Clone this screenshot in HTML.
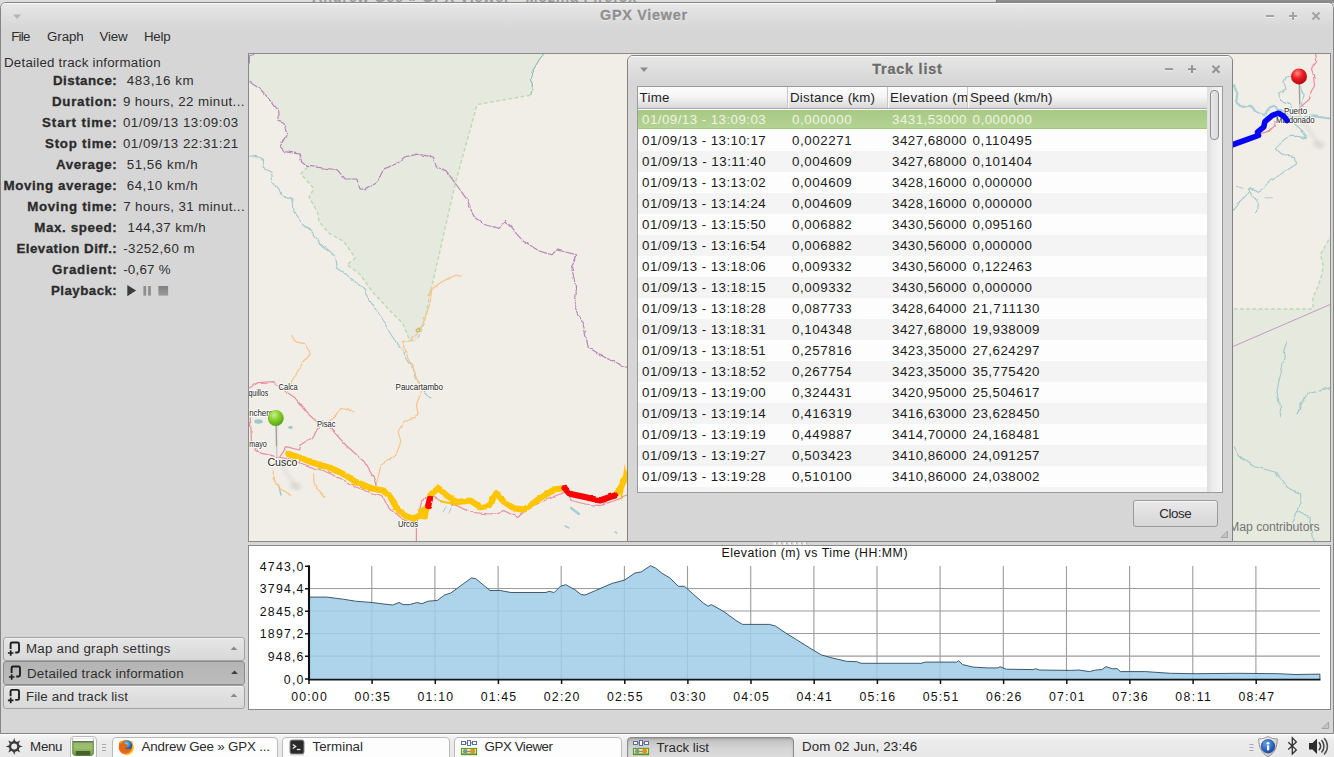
<!DOCTYPE html>
<html><head><meta charset="utf-8"><title>GPX Viewer</title>
<style>
*{box-sizing:border-box;margin:0;padding:0}
html,body{width:1334px;height:757px;overflow:hidden;background:#d6d6d6;font-family:"Liberation Sans",sans-serif;}
#root{position:absolute;left:0;top:0;width:1334px;height:757px;overflow:hidden;background:#d6d6d6}
.a{position:absolute}
.t{position:absolute;white-space:pre;}
svg{position:absolute;left:0;top:0;overflow:visible}
</style></head>
<body><div id="root">
<!-- p_window -->
<div class="a" style="left:0;top:0;width:997px;height:3px;background:#dcdcdc"></div>
<div class="a" style="left:996px;top:0;width:338px;height:3px;background:#8e8e8e"></div>
<div class="a" style="left:996px;top:0;width:1px;height:3px;background:#777"></div>
<div class="a" style="left:312px;top:-10px;width:340px;height:13px;overflow:hidden;font-size:14.5px;font-weight:bold;color:#9a9a9a;line-height:15px;letter-spacing:.72px;white-space:pre">Andrew Gee » GPX Viewer - Mozilla Firefox</div>
<div class="a" style="left:0;top:2px;width:1334px;height:732px;border:1px solid #858585;border-radius:6px 6px 0 0;background:#d6d6d6"></div>
<div class="a" style="left:1px;top:3px;width:1332px;height:26px;border-radius:5px 5px 0 0;background:linear-gradient(#e7e7e7,#d6d6d6);border-top:1px solid #fbfbfb"></div>
<span class="t" id="t1" style="top:5.13px;font-size:14.35px;line-height:20px;color:#8f8f8f;font-weight:bold;-webkit-text-stroke:.3px #8f8f8f;letter-spacing:0.748px;left:443.87px;width:400px;text-align:center;text-shadow:0 1px 0 #f4f4f4;">GPX Viewer</span>
<svg width="1334" height="60"><path d="M13 14.5h8l-4 4.5z" fill="#b4b4b4"/><path d="M13 15.5l4 4.5 4-4.5" fill="none" stroke="#eee" stroke-width="1" opacity=".0"/>
<g stroke="#a3a3a3" stroke-width="2" fill="none"><path d="M1266 16h8" /><path d="M1289 16h8M1293 12v8"/><path d="M1312.5 12.5l7 7M1319.5 12.5l-7 7"/></g><g stroke="#f2f2f2" stroke-width="1" fill="none" opacity=".9"><path d="M1266 17.5h8"/><path d="M1289 17.5h3M1294 17.5h3M1292 20.5h2"/></g></svg>
<span class="t" id="t2" style="top:26.68px;font-size:13.32px;line-height:20px;color:#2e2e2e;letter-spacing:-0.718px;left:11.20px;">File</span>
<span class="t" id="t3" style="top:26.68px;font-size:13.32px;line-height:20px;color:#2e2e2e;letter-spacing:-0.075px;left:47.00px;">Graph</span>
<span class="t" id="t4" style="top:26.68px;font-size:13.32px;line-height:20px;color:#2e2e2e;letter-spacing:-0.208px;left:99.60px;">View</span>
<span class="t" id="t5" style="top:26.68px;font-size:13.32px;line-height:20px;color:#2e2e2e;letter-spacing:-0.197px;left:143.90px;">Help</span>
<svg width="1334" height="757"><path d="M1328.5 722l-6.5 6.5h6.5z" fill="#c4c4c4" stroke="#9a9a9a" stroke-width=".8"/></svg>
<!-- p_left -->
<span class="t" id="t6" style="top:52.98px;font-size:13.32px;line-height:20px;color:#2e2e2e;letter-spacing:0.226px;left:4.00px;">Detailed track information</span>
<span class="t" id="t7" style="top:70.98px;font-size:13.32px;line-height:20px;color:#2b2b2b;font-weight:bold;-webkit-text-stroke:.3px #2b2b2b;letter-spacing:0.483px;left:53.00px;">Distance:</span>
<span class="t" id="t8" style="top:70.98px;font-size:13.32px;line-height:20px;color:#2e2e2e;letter-spacing:0.591px;left:126.70px;">483,16 km</span>
<span class="t" id="t9" style="top:91.98px;font-size:13.32px;line-height:20px;color:#2b2b2b;font-weight:bold;-webkit-text-stroke:.3px #2b2b2b;letter-spacing:0.704px;left:52.00px;">Duration:</span>
<span class="t" id="t10" style="top:91.98px;font-size:13.32px;line-height:20px;color:#2e2e2e;letter-spacing:0.402px;left:122.90px;">9 hours, 22 minut...</span>
<span class="t" id="t11" style="top:112.98px;font-size:13.32px;line-height:20px;color:#2b2b2b;font-weight:bold;-webkit-text-stroke:.3px #2b2b2b;letter-spacing:0.886px;left:42.10px;">Start time:</span>
<span class="t" id="t12" style="top:112.98px;font-size:13.32px;line-height:20px;color:#2e2e2e;letter-spacing:0.497px;left:122.90px;">01/09/13 13:09:03</span>
<span class="t" id="t13" style="top:133.98px;font-size:13.32px;line-height:20px;color:#2b2b2b;font-weight:bold;-webkit-text-stroke:.3px #2b2b2b;letter-spacing:0.734px;left:45.10px;">Stop time:</span>
<span class="t" id="t14" style="top:133.98px;font-size:13.32px;line-height:20px;color:#2e2e2e;letter-spacing:0.497px;left:122.90px;">01/09/13 22:31:21</span>
<span class="t" id="t15" style="top:154.98px;font-size:13.32px;line-height:20px;color:#2b2b2b;font-weight:bold;-webkit-text-stroke:.3px #2b2b2b;letter-spacing:0.617px;left:56.00px;">Average:</span>
<span class="t" id="t16" style="top:154.98px;font-size:13.32px;line-height:20px;color:#2e2e2e;letter-spacing:0.558px;left:126.70px;">51,56 km/h</span>
<span class="t" id="t17" style="top:175.98px;font-size:13.32px;line-height:20px;color:#2b2b2b;font-weight:bold;-webkit-text-stroke:.3px #2b2b2b;letter-spacing:0.588px;left:3.50px;">Moving average:</span>
<span class="t" id="t18" style="top:175.98px;font-size:13.32px;line-height:20px;color:#2e2e2e;letter-spacing:0.558px;left:126.70px;">64,10 km/h</span>
<span class="t" id="t19" style="top:196.98px;font-size:13.32px;line-height:20px;color:#2b2b2b;font-weight:bold;-webkit-text-stroke:.3px #2b2b2b;letter-spacing:0.682px;left:27.20px;">Moving time:</span>
<span class="t" id="t20" style="top:196.98px;font-size:13.32px;line-height:20px;color:#2e2e2e;letter-spacing:0.396px;left:123.20px;">7 hours, 31 minut...</span>
<span class="t" id="t21" style="top:217.98px;font-size:13.32px;line-height:20px;color:#2b2b2b;font-weight:bold;-webkit-text-stroke:.3px #2b2b2b;letter-spacing:0.640px;left:34.20px;">Max. speed:</span>
<span class="t" id="t22" style="top:217.98px;font-size:13.32px;line-height:20px;color:#2e2e2e;letter-spacing:0.493px;left:127.50px;">144,37 km/h</span>
<span class="t" id="t23" style="top:238.98px;font-size:13.32px;line-height:20px;color:#2b2b2b;font-weight:bold;-webkit-text-stroke:.3px #2b2b2b;letter-spacing:0.480px;left:16.40px;">Elevation Diff.:</span>
<span class="t" id="t24" style="top:238.98px;font-size:13.32px;line-height:20px;color:#2e2e2e;letter-spacing:0.440px;left:123.20px;">-3252,60 m</span>
<span class="t" id="t25" style="top:259.98px;font-size:13.32px;line-height:20px;color:#2b2b2b;font-weight:bold;-webkit-text-stroke:.3px #2b2b2b;letter-spacing:0.704px;left:52.00px;">Gradient:</span>
<span class="t" id="t26" style="top:259.98px;font-size:13.32px;line-height:20px;color:#2e2e2e;letter-spacing:0.235px;left:123.20px;">-0,67 %</span>
<span class="t" id="t27" style="top:280.98px;font-size:13.32px;line-height:20px;color:#2b2b2b;font-weight:bold;-webkit-text-stroke:.3px #2b2b2b;letter-spacing:0.454px;left:51.00px;">Playback:</span>
<svg width="300" height="320"><defs><linearGradient id="gst" x1="0" y1="0" x2="0" y2="1"><stop offset="0" stop-color="#7e7e7e"/><stop offset="1" stop-color="#9c9c9c"/></linearGradient></defs><path d="M127.3 285v11.2l8.8-5.6z" fill="#3c3c3c"/><rect x="143.4" y="286" width="2.8" height="9.6" fill="#8f8f8f"/><rect x="148.1" y="286" width="2.8" height="9.6" fill="#8f8f8f"/><rect x="158.4" y="286" width="9.7" height="9.6" fill="url(#gst)"/></svg>
<div class="a" style="left:3px;top:637px;width:242px;height:24px;border:1px solid #a2a2a2;border-radius:3px;background:linear-gradient(#e6e6e6,#d8d8d8);box-shadow:inset 0 1px 0 #f3f3f3;"></div>
<div class="a" style="left:3px;top:661px;width:242px;height:24px;border:1px solid #8c8c8c;border-radius:3px;background:linear-gradient(#b4b4b4,#bcbcbc);"></div>
<div class="a" style="left:3px;top:685px;width:242px;height:24px;border:1px solid #a2a2a2;border-radius:3px;background:linear-gradient(#e6e6e6,#d8d8d8);box-shadow:inset 0 1px 0 #f3f3f3;"></div>
<span class="t" id="t28" style="top:639.48px;font-size:13.32px;line-height:20px;color:#2e2e2e;letter-spacing:0.255px;left:25.90px;">Map and graph settings</span>
<span class="t" id="t29" style="top:664.08px;font-size:13.32px;line-height:20px;color:#2e2e2e;letter-spacing:0.226px;left:27.00px;">Detailed track information</span>
<span class="t" id="t30" style="top:687.48px;font-size:13.32px;line-height:20px;color:#2e2e2e;letter-spacing:0.117px;left:25.90px;">File and track list</span>
<svg width="300" height="757"><g transform="translate(8.4 641.3)" fill="none" stroke="#1f1f1f" stroke-width="1.9"><path d="M2.2 7.6V2.6q0-1.4 1.4-1.4h5.6q1.4 0 1.4 1.4v7.2q0 1.4-1.4 1.4H6.8"/><path d="M-0.5 11.7h5.6M2.3 8.9v5.6" stroke-width="1.7"/></g><g transform="translate(9.4 665.3)" fill="none" stroke="#1f1f1f" stroke-width="1.9"><path d="M2.2 7.6V2.6q0-1.4 1.4-1.4h5.6q1.4 0 1.4 1.4v7.2q0 1.4-1.4 1.4H6.8"/><path d="M-0.5 11.7h5.6M2.3 8.9v5.6" stroke-width="1.7"/></g><g transform="translate(8.4 688.7)" fill="none" stroke="#1f1f1f" stroke-width="1.9"><path d="M2.2 7.6V2.6q0-1.4 1.4-1.4h5.6q1.4 0 1.4 1.4v7.2q0 1.4-1.4 1.4H6.8"/><path d="M-0.5 11.7h5.6M2.3 8.9v5.6" stroke-width="1.7"/></g><path d="M233.9 646.5l-3.4 3.6h6.8z" fill="#8a8a8a"/><path d="M234.5 670.5l-3.4 3.6h6.8z" fill="#3c3c3c"/><path d="M233.9 693.5l-3.4 3.6h6.8z" fill="#8a8a8a"/></svg>
<!-- p_map -->
<div class="a" style="left:248px;top:53px;width:1083px;height:489px;border:1px solid #8a8a8a;background:#f1eee8"></div>
<svg width="1334" height="757" viewBox="0 0 1334 757" font-family="Liberation Sans, sans-serif">
<defs><clipPath id="mc"><rect x="249" y="54" width="1081" height="487"/></clipPath><filter id="wig" filterUnits="userSpaceOnUse" x="240" y="46" width="1100" height="504"><feTurbulence type="fractalNoise" baseFrequency="0.11" numOctaves="2" seed="7" result="n"/><feDisplacementMap in="SourceGraphic" in2="n" scale="3.2" xChannelSelector="R" yChannelSelector="G"/></filter><filter id="wig2" filterUnits="userSpaceOnUse" x="240" y="46" width="1100" height="504"><feTurbulence type="fractalNoise" baseFrequency="0.075" numOctaves="2" seed="3" result="n"/><feDisplacementMap in="SourceGraphic" in2="n" scale="7" xChannelSelector="R" yChannelSelector="G"/></filter><filter id="wig1" filterUnits="userSpaceOnUse" x="240" y="46" width="1100" height="504"><feTurbulence type="fractalNoise" baseFrequency="0.16" numOctaves="2" seed="11" result="n"/><feDisplacementMap in="SourceGraphic" in2="n" scale="2.6" xChannelSelector="R" yChannelSelector="G"/></filter><filter id="blur2" x="-50%" y="-50%" width="200%" height="200%"><feGaussianBlur stdDeviation="1.8"/></filter><radialGradient id="gpin" cx=".4" cy=".3" r=".75"><stop offset="0" stop-color="#c9f08a"/><stop offset=".45" stop-color="#86cf2c"/><stop offset="1" stop-color="#4f9d10"/></radialGradient><radialGradient id="rpin" cx=".4" cy=".3" r=".75"><stop offset="0" stop-color="#ff8a8a"/><stop offset=".45" stop-color="#ee1c24"/><stop offset="1" stop-color="#a80810"/></radialGradient></defs>
<g clip-path="url(#mc)" fill="none" stroke-linejoin="round" stroke-linecap="round">
<path d="M249.0 54.0 L543.6 54.0 L539.0 60.0 L535.3 66.5 L532.0 72.0 L530.4 79.7 L532.5 84.0 L532.0 89.6 L530.4 95.2 L477.1 104.5 L455.6 182.1 L431.0 290.0 L424.0 323.7 L417.5 340.0 L416.0 341.0 L409.7 340.5 L403.0 323.7 L389.5 310.2 L371.8 291.0 L360.3 274.6 L347.0 264.7 L355.3 258.0 L343.8 241.5 L329.0 233.3 L319.0 221.7 L317.3 211.8 L309.0 197.0 L314.0 188.7 L300.8 173.8 L307.5 167.0 L307.5 166.4 L301.5 162.0 L300.5 154.1 L283.7 151.5 L279.7 147.1 L286.7 134.2 L284.0 122.3 L278.1 120.4 L277.7 109.5 L268.8 98.6 L259.9 88.7 L249.6 82.1 L249.0 82.0 Z" fill="#e6e9de" stroke="none"/>
<path d="M1227.0 309.0 L1313.0 309.0 L1313.0 297.5 L1318.0 286.0 L1322.0 274.4 L1323.0 265.0 L1320.5 254.6 L1328.7 239.8 L1331.0 236.0 L1331.0 545.0 L1227.0 545.0 Z" fill="#e6e9de" stroke="none"/>
<path d="M249.6 157.3 L256.0 156.4 L262.5 159.5 L263.0 167.0 L271.5 173.0 L272.8 180.8 L278.7 188.8 L283.0 195.0 L292.6 198.6 L294.0 211.8 L304.0 225.0 L314.0 235.0 L322.3 244.8 L335.5 256.4 L337.0 268.0 L353.7 279.5 L364.0 290.0 L372.0 303.0 L382.7 320.0 L391.0 334.0 L399.6 347.0 L406.0 356.0 L413.0 367.5 L416.0 376.0 L419.8 386.0 L430.0 397.8" stroke="#a2c9cd" stroke-width="1.15" filter="url(#wig2)"/>
<path d="M543.6 54.0 L539.0 60.0 L535.3 66.5 L532.0 72.0 L530.4 79.7 L532.5 84.0 L532.0 89.6 L530.4 95.2" stroke="#8fbdae" stroke-width="1.15" filter="url(#wig)"/>
<path d="M1286.0 76.2 L1283.9 81.5 L1286.0 88.9 L1278.6 93.1 L1280.7 99.5 L1289.2 103.7 L1291.3 106.9 L1293.0 112.0" stroke="#a2c9cd" stroke-width="1.15" filter="url(#wig2)"/>
<path d="M1286.0 76.2 L1292.0 75.0" stroke="#a2c9cd" stroke-width="1.15" filter="url(#wig2)"/>
<path d="M1301.9 85.7 L1303.0 96.3 L1300.8 104.7 L1298.0 112.0" stroke="#a2c9cd" stroke-width="1.15" filter="url(#wig2)"/>
<path d="M1294.5 118.0 L1294.5 123.8 L1303.0 131.2 L1307.2 138.6 L1299.8 135.4 L1289.2 135.4 L1279.7 142.8 L1276.5 149.1 L1282.9 155.5 L1294.5 157.6 L1295.5 162.9 L1286.0 169.2 L1278.6 176.6 L1265.9 185.1 L1257.5 191.4 L1249.0 186.1 L1252.2 194.6 L1257.5 202.0 L1256.4 212.6" stroke="#a2c9cd" stroke-width="1.15" filter="url(#wig2)"/>
<path d="M1233.2 210.4 L1238.5 202.0 L1245.9 197.8 L1250.5 191.5" stroke="#a2c9cd" stroke-width="1.15" filter="url(#wig2)"/>
<path d="M1287.6 342.0 L1285.0 350.0 L1282.5 365.6 L1280.0 378.0 L1277.0 389.7 L1280.8 417.0" stroke="#a2c9cd" stroke-width="1.15" filter="url(#wig2)"/>
<path d="M1330.6 388.0 L1320.0 391.0 L1310.0 393.0 L1301.0 403.4 L1297.0 413.7" stroke="#a2c9cd" stroke-width="1.15" filter="url(#wig2)"/>
<path d="M1232.6 446.0 L1238.0 455.0 L1244.7 460.0 L1253.0 466.0 L1262.0 468.7 L1277.0 472.0 L1281.0 479.0 L1286.0 486.0 L1294.0 491.0 L1299.6 496.0 L1300.0 505.0 L1298.0 513.0 L1310.0 518.5 L1313.0 528.0 L1315.0 541.0" stroke="#a2c9cd" stroke-width="1.15" filter="url(#wig2)"/>
<path d="M1298.0 513.0 L1292.8 522.0" stroke="#a2c9cd" stroke-width="1.15" filter="url(#wig2)"/>
<path d="M1230.0 80.0 L1233.2 85.7 L1237.4 93.1 L1236.3 101.6 L1242.7 106.9 L1250.0 105.8 L1257.5 112.1 L1264.9 115.3 L1268.0 107.9 L1274.4 105.8 L1280.7 110.0 L1287.0 114.0 L1293.4 117.4 L1301.9 117.4 L1314.6 116.4 L1329.4 118.5 L1333.0 118.5" stroke="#abd0d3" stroke-width="2.1" filter="url(#wig)"/>
<ellipse cx="258.5" cy="421.5" rx="4.2" ry="2.2" fill="#9cc7cc" stroke="none"/><ellipse cx="290.5" cy="427.5" rx="2.2" ry="1.4" fill="#9cc7cc" stroke="none"/><path d="M571 508l8 6" stroke="#a6ccd0" stroke-width="2.2"/><path d="M446 507l-3 5M451 508l-2 5" stroke="#a6ccd0" stroke-width="1"/><path d="M279 487l2 8" stroke="#9cc7cc" stroke-width="1.4"/><path d="M565 526l4 2M615 532l2 1" stroke="#a6ccd0" stroke-width="1.4"/><path d="M1236.3 186.1l6.4 2.2M1265 197.8h7.3" stroke="#a6ccd0" stroke-width="1"/>
<path d="M307.5 167.0 L300.8 173.8 L314.0 188.7 L309.0 197.0 L317.3 211.8 L319.0 221.7 L329.0 233.3 L343.8 241.5 L355.3 258.0 L347.0 264.7 L360.3 274.6 L371.8 291.0 L389.5 310.2 L403.0 323.7 L409.7 340.5 L416.0 341.0" stroke="#bcdab4" stroke-width="1.45" stroke-dasharray="3.8 2.4" stroke-linecap="butt"/>
<path d="M530.4 95.2 L477.1 104.5 L455.6 182.1 L431.0 290.0 L424.0 323.7 L417.5 340.0" stroke="#bcdab4" stroke-width="1.45" stroke-dasharray="3.8 2.4" stroke-linecap="butt"/>
<path d="M1328.7 239.8 L1320.5 254.6 L1323.0 265.0 L1322.0 274.4 L1318.0 286.0 L1313.0 297.5 L1313.0 309.0 L1233.0 309.0" stroke="#bcdab4" stroke-width="1.45" stroke-dasharray="3.8 2.4" stroke-linecap="butt"/>
<path d="M249.6 82.1 L259.9 88.7 L268.8 98.6 L277.7 109.5 L278.1 120.4 L284.0 122.3 L286.7 134.2 L279.7 147.1 L283.7 151.5 L300.5 154.1 L301.5 162.0 L307.5 166.4 L323.3 167.9 L337.2 169.9 L345.1 178.8 L357.0 179.2 L360.0 188.8 L365.0 189.7 L376.8 182.8 L383.8 168.9 L396.7 164.0 L404.6 157.0 L416.5 154.1 L433.3 157.0 L436.3 166.9 L446.2 170.9 L454.4 182.1 L467.6 200.3 L471.0 210.0 L475.9 218.4 L485.8 225.0 L499.0 228.3 L505.6 221.7 L522.1 239.9 L538.6 250.8 L551.8 254.8 L556.8 249.8 L576.6 254.8 L571.6 268.0 L574.9 281.2 L576.2 295.0 L574.7 306.8 L583.1 323.7 L588.2 347.3 L605.0 357.4 L626.9 367.5" stroke="#b685b8" stroke-width="1.2" stroke-dasharray="9 1" stroke-linecap="butt" filter="url(#wig)"/>
<path d="M249 56l5-1.5M249.5 56v7" stroke="#b784b8" stroke-width="1"/>
<path d="M1232.6 346.7 L1332.0 303.7" stroke="#c39ac6" stroke-width="1"/>
<path d="M428.0 296.0 L433.0 287.8 L442.8 281.2 L449.5 277.9 L456.0 275.2 L461.0 276.2" stroke="#f8c487" stroke-width="1.2" filter="url(#wig)"/>
<path d="M431.6 291.0 L430.0 303.5 L423.0 323.7 L417.0 333.8 L409.7 342.2 L403.5 342.0 L406.3 354.0 L413.0 367.5 L416.4 378.0 L421.5 391.0 L416.4 404.5 L418.0 414.6 L409.7 419.7 L403.0 423.0 L398.0 431.5 L401.0 441.6 L396.0 455.0 L388.0 461.0 L381.0 465.0 L377.7 478.6 L376.0 485.4" stroke="#f8c487" stroke-width="1.2" filter="url(#wig)"/>
<path d="M291.8 335.5 L294.0 340.0 L296.8 342.2 L305.0 343.9 L308.0 350.0 L310.3 354.0 L302.0 364.0 L291.8 381.0 L288.4 391.0" stroke="#f8c487" stroke-width="1.2" filter="url(#wig)"/>
<path d="M354.0 412.0 L347.0 409.5 L340.6 408.6 L335.6 416.3 L327.0 423.0" stroke="#f8c487" stroke-width="1.2" filter="url(#wig)"/>
<path d="M273.3 470.0 L273.3 478.6 L280.0 488.7 L291.8 495.5" stroke="#f8c487" stroke-width="1.2" filter="url(#wig)"/>
<path d="M313.7 473.6 L314.0 482.0 L317.0 488.7 L323.8 497.0" stroke="#f8c487" stroke-width="1.2" filter="url(#wig)"/>
<path d="M416 330l3-2 1 3-3 1z" stroke="#c9b45c" stroke-width="1.2"/>
<path d="M249.7 387.7 L258.0 382.6 L273.3 381.6 L285.0 391.0 L295.0 397.8 L307.0 413.0 L320.4 424.7 L330.5 428.0 L345.7 445.0 L364.2 461.8 L374.3 478.6 L376.0 485.4" stroke="#e6919f" stroke-width="1.25" filter="url(#wig)"/>
<path d="M320.4 424.7 L312.0 438.0 L300.0 445.0 L298.5 450.0 L286.7 446.6 L280.0 456.7" stroke="#e6919f" stroke-width="1.25" filter="url(#wig)"/>
<path d="M249.7 412.0 L251.0 430.0 L251.4 445.0 L261.5 453.4 L276.6 456.7 L283.0 458.0" stroke="#e6919f" stroke-width="1.25" filter="url(#wig)"/>
<path d="M283.0 458.0 L300.0 463.0 L315.0 468.0 L332.0 474.0 L345.0 481.0 L356.0 487.0 L372.0 493.0 L382.7 495.5 L389.5 509.0 L403.0 519.0 L416.4 525.8 L416.4 541.0" stroke="#e6919f" stroke-width="1.25" filter="url(#wig)"/>
<path d="M416.4 525.8 L419.0 512.0 L421.5 502.0 L428.0 493.8 L440.0 500.5 L456.8 505.6 L470.3 512.3 L490.5 514.0 L504.0 510.6 L517.5 517.4 L527.6 509.0 L541.0 502.0 L564.6 492.0 L571.4 500.5 L584.8 504.0 L600.0 505.6 L615.0 500.5 L627.0 496.0" stroke="#e6919f" stroke-width="1.25" filter="url(#wig)"/>
<path d="M1315.6 54.0 L1316.7 61.4 L1311.4 68.8 L1313.5 75.1 L1314.6 85.7 L1311.4 91.0 L1309.3 99.5 L1302.9 104.7 L1299.8 110.0" stroke="#e6919f" stroke-width="1.25" filter="url(#wig)"/>
<path d="M1261.7 133.3 L1269.1 131.2 L1274.4 125.9 L1275.5 121.7" stroke="#e6919f" stroke-width="1.25" filter="url(#wig)"/>
</g><g clip-path="url(#mc)">
<text x="278.6" y="390.0" font-size="8.6" fill="#1d1d1d" stroke="#fbfaf6" stroke-width="2.2" stroke-linejoin="round" paint-order="stroke" textLength="19.2" lengthAdjust="spacingAndGlyphs">Calca</text>
<text x="239.8" y="395.8" font-size="8.6" fill="#1d1d1d" stroke="#fbfaf6" stroke-width="2.2" stroke-linejoin="round" paint-order="stroke" textLength="28.5" lengthAdjust="spacingAndGlyphs">Ollquillos</text>
<text x="249.2" y="416.2" font-size="8.6" fill="#1d1d1d" stroke="#fbfaf6" stroke-width="2.2" stroke-linejoin="round" paint-order="stroke" textLength="24.0" lengthAdjust="spacingAndGlyphs">nchero</text>
<text x="317.0" y="427.0" font-size="8.6" fill="#1d1d1d" stroke="#fbfaf6" stroke-width="2.2" stroke-linejoin="round" paint-order="stroke" textLength="18.5" lengthAdjust="spacingAndGlyphs">Pisac</text>
<text x="249.2" y="446.8" font-size="8.6" fill="#1d1d1d" stroke="#fbfaf6" stroke-width="2.2" stroke-linejoin="round" paint-order="stroke" textLength="17.5" lengthAdjust="spacingAndGlyphs">mayo</text>
<text x="267.4" y="465.5" font-size="11" fill="#1d1d1d" stroke="#fbfaf6" stroke-width="2.2" stroke-linejoin="round" paint-order="stroke" textLength="30.0" lengthAdjust="spacingAndGlyphs">Cusco</text>
<text x="395.6" y="390.0" font-size="8.6" fill="#1d1d1d" stroke="#fbfaf6" stroke-width="2.2" stroke-linejoin="round" paint-order="stroke" textLength="47.4" lengthAdjust="spacingAndGlyphs">Paucartambo</text>
<text x="398.0" y="527.0" font-size="8.6" fill="#1d1d1d" stroke="#fbfaf6" stroke-width="2.2" stroke-linejoin="round" paint-order="stroke" textLength="20.0" lengthAdjust="spacingAndGlyphs">Urcos</text>
<text x="1283.9" y="114.4" font-size="8.6" fill="#1d1d1d" stroke="#fbfaf6" stroke-width="2.2" stroke-linejoin="round" paint-order="stroke" textLength="23.3" lengthAdjust="spacingAndGlyphs">Puerto</text>
<text x="1276.1" y="122.8" font-size="8.6" fill="#1d1d1d" stroke="#fbfaf6" stroke-width="2.2" stroke-linejoin="round" paint-order="stroke" textLength="38.5" lengthAdjust="spacingAndGlyphs">Maldonado</text>
</g><g clip-path="url(#mc)" fill="none" stroke-linejoin="round" stroke-linecap="round">
<path d="M288.4 454.0 L301.9 458.4 L315.4 463.5 L332.2 468.5 L345.7 475.2 L355.8 482.0 L372.6 488.7 L382.7 490.4 L389.5 495.5 L396.2 507.2 L404.6 515.7 L413.0 518.4 L419.8 515.7 L424.8 516.3 L425.8 509.0 L421.5 510.6 L424.0 514.0 L428.2 505.6" stroke="#ffc503" stroke-width="6.2" filter="url(#wig1)"/>
<path d="M429.9 498.8 L431.6 493.8 L438.3 488.0 L446.7 495.5 L456.8 502.2 L470.3 500.5 L480.4 507.2 L488.8 505.6 L496.6 493.0 L504.0 502.0 L514.0 508.3 L524.2 509.6 L534.3 502.2 L544.4 495.5 L554.5 489.4 L564.6 488.0" stroke="#ffc503" stroke-width="6.2" filter="url(#wig1)"/>
<path d="M615.0 495.5 L617.5 492.5 L621.5 486.0 L625.0 478.5 L628.0 473.0" stroke="#ffc503" stroke-width="6.2" filter="url(#wig1)"/>
<path d="M441.0 501.5 L452.0 503.5 L463.0 502.5" stroke="#ffc503" stroke-width="2.2"/>
<path d="M428.2 506.0 L429.9 498.8" stroke="#fb0606" stroke-width="6.2" filter="url(#wig1)"/>
<path d="M564.6 488.0 L569.7 493.8 L584.8 497.0 L600.0 500.5 L610.0 497.0 L615.0 495.5" stroke="#fb0606" stroke-width="6.2" filter="url(#wig1)"/>
<path d="M1228.0 146.3 L1233.2 144.5 L1258.5 135.4 L1257.5 132.2 L1263.8 126.9 L1264.9 121.7 L1272.3 115.3 L1278.6 113.2 L1283.9 116.4 L1287.1 120.6" stroke="#0505f2" stroke-width="5.6"/>
<path d="M621.5 487L624.8 463.5L627.5 481Z M619.6 489L621.3 501.5L624 487Z" fill="#ffc503" stroke="none"/>
</g>
<g clip-path="url(#mc)">
<g><path d="M280.8 464.1l16 24" stroke="#7a7a7a" stroke-width="4.5" stroke-linecap="round" opacity=".09" filter="url(#blur2)"/><ellipse cx="295.8" cy="486.1" rx="7" ry="4" fill="#777" opacity=".10" filter="url(#blur2)"/><path d="M276.2 424.1L276.6 446.1" stroke="#9c9c9c" stroke-width="1.5"/><path d="M276.6 446.1L276.8 457.1" stroke="#a8a8a8" stroke-width="1.3" opacity=".55"/><path d="M277.2 425.1L277.5 446.1" stroke="#dedede" stroke-width=".8"/><circle cx="275.8" cy="418.1" r="8" fill="url(#gpin)"/></g>
<g><path d="M1304.0 122.4l16 24" stroke="#7a7a7a" stroke-width="4.5" stroke-linecap="round" opacity=".09" filter="url(#blur2)"/><ellipse cx="1319.0" cy="144.4" rx="7" ry="4" fill="#777" opacity=".10" filter="url(#blur2)"/><path d="M1299.4 82.4L1299.8 104.4" stroke="#9c9c9c" stroke-width="1.5"/><path d="M1299.8 104.4L1300.0 115.4" stroke="#a8a8a8" stroke-width="1.3" opacity=".55"/><path d="M1300.4 83.4L1300.7 104.4" stroke="#dedede" stroke-width=".8"/><circle cx="1299.0" cy="76.4" r="8" fill="url(#rpin)"/></g>
</g>
</svg>
<span class="t" id="t31" style="top:517.24px;font-size:12.30px;line-height:20px;color:#767676;letter-spacing:-0.073px;left:1229.10px;">Map contributors</span>
<!-- p_chart -->
<div class="a" style="left:248px;top:545px;width:1083px;height:165px;border:1px solid #8a8a8a;background:#fff"></div>
<svg width="1334" height="757" viewBox="0 0 1334 757" shape-rendering="auto">
<path d="M371.8 566V679M434.9 566V679M498.1 566V679M561.2 566V679M624.4 566V679M687.5 566V679M750.7 566V679M813.9 566V679M877.0 566V679M940.1 566V679M1003.3 566V679M1066.5 566V679M1129.6 566V679M1192.8 566V679M1255.9 566V679M310 588.50H1320M310 611.00H1320M310 633.50H1320M310 656.10H1320" stroke="#9c9c9c" stroke-width="1.1" fill="none"/>
<path d="M309.2 679 L309.2 597.1 L326.6 597.1 L343.2 599.2 L355.6 601.2 L372.1 602.5 L384.5 604.1 L392.8 605.0 L399.0 602.5 L403.2 604.6 L409.4 604.6 L416.8 602.5 L421.8 603.7 L428.0 601.2 L437.5 600.4 L444.5 595.0 L450.8 593.0 L461.0 585.5 L471.4 578.0 L475.6 578.5 L483.9 585.5 L490.0 590.5 L500.4 590.5 L510.8 592.5 L545.9 592.5 L549.2 591.3 L554.2 592.5 L560.4 586.3 L565.8 584.7 L574.9 589.7 L581.1 594.6 L585.2 595.0 L595.6 590.5 L612.1 583.4 L624.5 580.1 L634.9 573.1 L641.1 571.9 L650.6 565.7 L655.6 568.1 L661.8 573.1 L670.1 578.1 L678.3 586.3 L684.5 586.3 L692.8 593.8 L703.2 602.9 L708.1 606.2 L711.4 604.6 L723.9 611.6 L736.3 620.7 L742.5 624.4 L769.4 624.4 L775.6 626.1 L785.9 633.1 L796.6 639.7 L811.1 648.8 L821.5 655.0 L834.0 658.4 L846.4 661.3 L856.8 661.7 L861.0 663.3 L921.2 663.3 L925.3 662.1 L956.5 662.1 L958.6 660.8 L962.7 664.6 L973.1 667.1 L987.6 667.9 L998.0 667.9 L1000.0 666.7 L1006.3 669.2 L1033.3 669.6 L1035.4 668.7 L1039.5 670.0 L1070.7 670.4 L1079.0 670.0 L1089.4 671.6 L1095.6 670.0 L1101.8 669.6 L1106.0 666.7 L1112.2 668.7 L1117.2 668.7 L1120.5 671.6 L1145.4 671.6 L1170.4 673.3 L1195.3 673.7 L1236.8 673.3 L1278.3 673.7 L1295.0 674.5 L1319.9 674.1 L1319.9 679 Z" fill="#9fcde6" fill-opacity=".85" stroke="none"/>
<path d="M309.2 597.1 L326.6 597.1 L343.2 599.2 L355.6 601.2 L372.1 602.5 L384.5 604.1 L392.8 605.0 L399.0 602.5 L403.2 604.6 L409.4 604.6 L416.8 602.5 L421.8 603.7 L428.0 601.2 L437.5 600.4 L444.5 595.0 L450.8 593.0 L461.0 585.5 L471.4 578.0 L475.6 578.5 L483.9 585.5 L490.0 590.5 L500.4 590.5 L510.8 592.5 L545.9 592.5 L549.2 591.3 L554.2 592.5 L560.4 586.3 L565.8 584.7 L574.9 589.7 L581.1 594.6 L585.2 595.0 L595.6 590.5 L612.1 583.4 L624.5 580.1 L634.9 573.1 L641.1 571.9 L650.6 565.7 L655.6 568.1 L661.8 573.1 L670.1 578.1 L678.3 586.3 L684.5 586.3 L692.8 593.8 L703.2 602.9 L708.1 606.2 L711.4 604.6 L723.9 611.6 L736.3 620.7 L742.5 624.4 L769.4 624.4 L775.6 626.1 L785.9 633.1 L796.6 639.7 L811.1 648.8 L821.5 655.0 L834.0 658.4 L846.4 661.3 L856.8 661.7 L861.0 663.3 L921.2 663.3 L925.3 662.1 L956.5 662.1 L958.6 660.8 L962.7 664.6 L973.1 667.1 L987.6 667.9 L998.0 667.9 L1000.0 666.7 L1006.3 669.2 L1033.3 669.6 L1035.4 668.7 L1039.5 670.0 L1070.7 670.4 L1079.0 670.0 L1089.4 671.6 L1095.6 670.0 L1101.8 669.6 L1106.0 666.7 L1112.2 668.7 L1117.2 668.7 L1120.5 671.6 L1145.4 671.6 L1170.4 673.3 L1195.3 673.7 L1236.8 673.3 L1278.3 673.7 L1295.0 674.5 L1319.9 674.1 L1319.9 679" fill="none" stroke="#2c4a60" stroke-width=".9"/>
<path d="M309 565.3V680" stroke="#111" stroke-width="2.1" fill="none"/><path d="M308 679.6H1320.5" stroke="#10161c" stroke-width="1.9" fill="none"/>
<path d="M309.0 680V684M372.1 680V684M435.3 680V684M498.4 680V684M561.6 680V684M624.8 680V684M687.9 680V684M751.0 680V684M814.2 680V684M877.4 680V684M940.5 680V684M1003.6 680V684M1066.8 680V684M1129.9 680V684M1193.1 680V684M1256.2 680V684M305 566.2H309M305 588.7H309M305 611.2H309M305 633.7H309M305 656.3H309M305 679.0H309" stroke="#111" stroke-width="1.5" fill="none"/>
</svg>
<span class="t" id="t32" style="top:543.44px;font-size:12.30px;line-height:20px;color:#111;letter-spacing:0.518px;left:614.76px;width:400px;text-align:center;">Elevation (m) vs Time (HH:MM)</span>
<span class="t" id="t33" style="top:687.34px;font-size:12.30px;line-height:20px;color:#111;letter-spacing:1.180px;left:109.59px;width:400px;text-align:center;">00:00</span>
<span class="t" id="t34" style="top:687.34px;font-size:12.30px;line-height:20px;color:#111;letter-spacing:1.180px;left:172.74px;width:400px;text-align:center;">00:35</span>
<span class="t" id="t35" style="top:687.34px;font-size:12.30px;line-height:20px;color:#111;letter-spacing:1.180px;left:235.89px;width:400px;text-align:center;">01:10</span>
<span class="t" id="t36" style="top:687.34px;font-size:12.30px;line-height:20px;color:#111;letter-spacing:1.180px;left:299.04px;width:400px;text-align:center;">01:45</span>
<span class="t" id="t37" style="top:687.34px;font-size:12.30px;line-height:20px;color:#111;letter-spacing:1.180px;left:362.19px;width:400px;text-align:center;">02:20</span>
<span class="t" id="t38" style="top:687.34px;font-size:12.30px;line-height:20px;color:#111;letter-spacing:1.180px;left:425.34px;width:400px;text-align:center;">02:55</span>
<span class="t" id="t39" style="top:687.34px;font-size:12.30px;line-height:20px;color:#111;letter-spacing:1.180px;left:488.49px;width:400px;text-align:center;">03:30</span>
<span class="t" id="t40" style="top:687.34px;font-size:12.30px;line-height:20px;color:#111;letter-spacing:1.180px;left:551.64px;width:400px;text-align:center;">04:05</span>
<span class="t" id="t41" style="top:687.34px;font-size:12.30px;line-height:20px;color:#111;letter-spacing:1.180px;left:614.79px;width:400px;text-align:center;">04:41</span>
<span class="t" id="t42" style="top:687.34px;font-size:12.30px;line-height:20px;color:#111;letter-spacing:1.180px;left:677.94px;width:400px;text-align:center;">05:16</span>
<span class="t" id="t43" style="top:687.34px;font-size:12.30px;line-height:20px;color:#111;letter-spacing:1.180px;left:741.09px;width:400px;text-align:center;">05:51</span>
<span class="t" id="t44" style="top:687.34px;font-size:12.30px;line-height:20px;color:#111;letter-spacing:1.180px;left:804.24px;width:400px;text-align:center;">06:26</span>
<span class="t" id="t45" style="top:687.34px;font-size:12.30px;line-height:20px;color:#111;letter-spacing:1.180px;left:867.39px;width:400px;text-align:center;">07:01</span>
<span class="t" id="t46" style="top:687.34px;font-size:12.30px;line-height:20px;color:#111;letter-spacing:1.180px;left:930.54px;width:400px;text-align:center;">07:36</span>
<span class="t" id="t47" style="top:687.34px;font-size:12.30px;line-height:20px;color:#111;letter-spacing:1.410px;left:993.81px;width:400px;text-align:center;">08:11</span>
<span class="t" id="t48" style="top:687.34px;font-size:12.30px;line-height:20px;color:#111;letter-spacing:1.180px;left:1056.84px;width:400px;text-align:center;">08:47</span>
<span class="t" id="t49" style="top:556.74px;font-size:12.30px;line-height:20px;color:#111;letter-spacing:1.195px;right:1029.40px;">4743,0</span>
<span class="t" id="t50" style="top:579.24px;font-size:12.30px;line-height:20px;color:#111;letter-spacing:1.195px;right:1029.40px;">3794,4</span>
<span class="t" id="t51" style="top:601.74px;font-size:12.30px;line-height:20px;color:#111;letter-spacing:1.195px;right:1029.40px;">2845,8</span>
<span class="t" id="t52" style="top:624.24px;font-size:12.30px;line-height:20px;color:#111;letter-spacing:1.195px;right:1029.40px;">1897,2</span>
<span class="t" id="t53" style="top:646.84px;font-size:12.30px;line-height:20px;color:#111;letter-spacing:1.205px;right:1029.40px;">948,6</span>
<span class="t" id="t54" style="top:669.54px;font-size:12.30px;line-height:20px;color:#111;letter-spacing:1.245px;right:1029.35px;">0,0</span>
<svg width="1334" height="757"><rect x="773.5" y="542.3" width="2.6" height="2.5" fill="#f6f6f6"/><rect x="776.0" y="542.6" width="1.2" height="1.2" fill="#a2a2a2"/><rect x="778.5" y="542.3" width="2.6" height="2.5" fill="#f6f6f6"/><rect x="781.0" y="542.6" width="1.2" height="1.2" fill="#a2a2a2"/><rect x="783.5" y="542.3" width="2.6" height="2.5" fill="#f6f6f6"/><rect x="786.0" y="542.6" width="1.2" height="1.2" fill="#a2a2a2"/><rect x="788.5" y="542.3" width="2.6" height="2.5" fill="#f6f6f6"/><rect x="791.0" y="542.6" width="1.2" height="1.2" fill="#a2a2a2"/><rect x="793.5" y="542.3" width="2.6" height="2.5" fill="#f6f6f6"/><rect x="796.0" y="542.6" width="1.2" height="1.2" fill="#a2a2a2"/><rect x="798.5" y="542.3" width="2.6" height="2.5" fill="#f6f6f6"/><rect x="801.0" y="542.6" width="1.2" height="1.2" fill="#a2a2a2"/><rect x="803.5" y="542.3" width="2.6" height="2.5" fill="#f6f6f6"/><rect x="806.0" y="542.6" width="1.2" height="1.2" fill="#a2a2a2"/></svg>
<!-- p_dialog -->
<div class="a" style="left:627px;top:55px;width:606px;height:487px;border:1px solid #828282;border-radius:6px 6px 0 0;background:#d6d6d6;overflow:hidden"><div class="a" style="left:0;top:0;width:604px;height:26px;background:linear-gradient(#e7e7e7,#d6d6d6);border-top:1px solid #fbfbfb"></div></div>
<span class="t" id="t55" style="top:58.53px;font-size:14.35px;line-height:20px;color:#6c6c6c;font-weight:bold;-webkit-text-stroke:.3px #6c6c6c;letter-spacing:0.811px;left:707.41px;width:400px;text-align:center;text-shadow:0 1px 0 #f4f4f4;">Track list</span>
<svg width="1334" height="757"><path d="M640 67.5h8l-4 4.5z" fill="#8c8c8c"/><g transform="translate(1 .7)"><g stroke="#939393" stroke-width="2" fill="none"><path d="M1164 68.5h8"/><path d="M1187 68.5h8M1191 64.5v8"/><path d="M1211.5 65l7 7M1218.5 65l-7 7"/></g><g stroke="#f2f2f2" stroke-width="1" fill="none" opacity=".9"><path d="M1164 70h8"/><path d="M1187 70h3M1192 70h3M1190 73h2"/></g></g><path d="M1227.5 531l-6.5 6.5h6.5z" fill="#c4c4c4" stroke="#9a9a9a" stroke-width=".8"/></svg>
<div class="a" style="left:637px;top:86px;width:586px;height:407px;border:1px solid #9a9a9a;background:#fdfdfd;overflow:hidden">
<div class="a" style="left:0;top:22px;width:569px;height:21px;background:#fdfdfd"></div>
<div class="a" style="left:0;top:23px;width:569px;height:19px;background:linear-gradient(#a7c983,#b4d394);border-bottom:1px solid #a2c67e"></div>
<div class="a" style="left:0;top:43px;width:569px;height:21px;background:#fdfdfd"></div>
<div class="a" style="left:0;top:64px;width:569px;height:21px;background:#f4f4f4"></div>
<div class="a" style="left:0;top:85px;width:569px;height:21px;background:#fdfdfd"></div>
<div class="a" style="left:0;top:106px;width:569px;height:21px;background:#f4f4f4"></div>
<div class="a" style="left:0;top:127px;width:569px;height:21px;background:#fdfdfd"></div>
<div class="a" style="left:0;top:148px;width:569px;height:21px;background:#f4f4f4"></div>
<div class="a" style="left:0;top:169px;width:569px;height:21px;background:#fdfdfd"></div>
<div class="a" style="left:0;top:190px;width:569px;height:21px;background:#f4f4f4"></div>
<div class="a" style="left:0;top:211px;width:569px;height:21px;background:#fdfdfd"></div>
<div class="a" style="left:0;top:232px;width:569px;height:21px;background:#f4f4f4"></div>
<div class="a" style="left:0;top:253px;width:569px;height:21px;background:#fdfdfd"></div>
<div class="a" style="left:0;top:274px;width:569px;height:21px;background:#f4f4f4"></div>
<div class="a" style="left:0;top:295px;width:569px;height:21px;background:#fdfdfd"></div>
<div class="a" style="left:0;top:316px;width:569px;height:21px;background:#f4f4f4"></div>
<div class="a" style="left:0;top:337px;width:569px;height:21px;background:#fdfdfd"></div>
<div class="a" style="left:0;top:358px;width:569px;height:21px;background:#f4f4f4"></div>
<div class="a" style="left:0;top:379px;width:569px;height:21px;background:#fdfdfd"></div>
<div class="a" style="left:0;top:400px;width:569px;height:21px;background:#f4f4f4"></div>
<div class="a" style="left:0;top:0;width:569px;height:22px;background:linear-gradient(#fdfdfd 0%,#f5f5f5 45%,#e6e6e6 75%,#d8d8d8 100%);border-bottom:1px solid #a8a8a8"></div>
<div class="a" style="left:149px;top:0;width:1px;height:21px;background:#c6c6c6"></div><div class="a" style="left:150px;top:0;width:1px;height:21px;background:#fcfcfc"></div>
<div class="a" style="left:249px;top:0;width:1px;height:21px;background:#c6c6c6"></div><div class="a" style="left:250px;top:0;width:1px;height:21px;background:#fcfcfc"></div>
<div class="a" style="left:329px;top:0;width:1px;height:21px;background:#c6c6c6"></div><div class="a" style="left:330px;top:0;width:1px;height:21px;background:#fcfcfc"></div>
<div class="a" style="left:569px;top:0;width:15px;height:405px;background:linear-gradient(90deg,#dedede,#ececec 40%,#f5f5f5)"></div>
<div class="a" style="left:572px;top:3px;width:9px;height:50px;border:1px solid #8e8e8e;border-radius:4px;background:linear-gradient(90deg,#e8e8e8,#dbdbdb)"></div>
</div>
<span class="t" id="t56" style="top:87.88px;font-size:13.32px;line-height:20px;color:#1e1e1e;letter-spacing:0.302px;left:639.50px;">Time</span>
<span class="t" id="t57" style="top:87.88px;font-size:13.32px;line-height:20px;color:#1e1e1e;letter-spacing:0.241px;left:790.00px;">Distance (km)</span>
<div class="a" style="left:887px;top:88px;width:80px;height:20px;overflow:hidden">
<span class="t" id="t58" style="top:-0.12px;font-size:13.32px;line-height:20px;color:#1e1e1e;letter-spacing:0.382px;left:3.00px;">Elevation (m)</span>
</div>
<span class="t" id="t59" style="top:87.88px;font-size:13.32px;line-height:20px;color:#1e1e1e;letter-spacing:0.234px;left:970.00px;">Speed (km/h)</span>
<span class="t" id="t60" style="top:109.88px;font-size:13.32px;line-height:20px;color:#eef3e2;letter-spacing:0.451px;left:642.10px;">01/09/13 - 13:09:03</span>
<span class="t" id="t61" style="top:109.88px;font-size:13.32px;line-height:20px;color:#eef3e2;letter-spacing:0.567px;left:792.10px;">0,000000</span>
<div class="a" style="left:887px;top:109.6px;width:79.5px;height:20px;overflow:hidden">
<span class="t" id="t62" style="top:0.28px;font-size:13.32px;line-height:20px;color:#eef3e2;letter-spacing:0.445px;left:5.10px;">3431,530000</span>
</div>
<span class="t" id="t63" style="top:109.88px;font-size:13.32px;line-height:20px;color:#eef3e2;letter-spacing:0.538px;left:972.50px;">0,000000</span>
<span class="t" id="t64" style="top:130.88px;font-size:13.32px;line-height:20px;color:#1c1c1c;letter-spacing:0.451px;left:642.10px;">01/09/13 - 13:10:17</span>
<span class="t" id="t65" style="top:130.88px;font-size:13.32px;line-height:20px;color:#1c1c1c;letter-spacing:0.567px;left:792.10px;">0,002271</span>
<div class="a" style="left:887px;top:130.6px;width:79.5px;height:20px;overflow:hidden">
<span class="t" id="t66" style="top:0.28px;font-size:13.32px;line-height:20px;color:#1c1c1c;letter-spacing:0.445px;left:5.10px;">3427,680000</span>
</div>
<span class="t" id="t67" style="top:130.88px;font-size:13.32px;line-height:20px;color:#1c1c1c;letter-spacing:0.679px;left:972.50px;">0,110495</span>
<span class="t" id="t68" style="top:151.88px;font-size:13.32px;line-height:20px;color:#1c1c1c;letter-spacing:0.506px;left:642.10px;">01/09/13 - 13:11:40</span>
<span class="t" id="t69" style="top:151.88px;font-size:13.32px;line-height:20px;color:#1c1c1c;letter-spacing:0.567px;left:792.10px;">0,004609</span>
<div class="a" style="left:887px;top:151.6px;width:79.5px;height:20px;overflow:hidden">
<span class="t" id="t70" style="top:0.28px;font-size:13.32px;line-height:20px;color:#1c1c1c;letter-spacing:0.445px;left:5.10px;">3427,680000</span>
</div>
<span class="t" id="t71" style="top:151.88px;font-size:13.32px;line-height:20px;color:#1c1c1c;letter-spacing:0.538px;left:972.50px;">0,101404</span>
<span class="t" id="t72" style="top:172.88px;font-size:13.32px;line-height:20px;color:#1c1c1c;letter-spacing:0.451px;left:642.10px;">01/09/13 - 13:13:02</span>
<span class="t" id="t73" style="top:172.88px;font-size:13.32px;line-height:20px;color:#1c1c1c;letter-spacing:0.567px;left:792.10px;">0,004609</span>
<div class="a" style="left:887px;top:172.6px;width:79.5px;height:20px;overflow:hidden">
<span class="t" id="t74" style="top:0.28px;font-size:13.32px;line-height:20px;color:#1c1c1c;letter-spacing:0.445px;left:5.10px;">3428,160000</span>
</div>
<span class="t" id="t75" style="top:172.88px;font-size:13.32px;line-height:20px;color:#1c1c1c;letter-spacing:0.538px;left:972.50px;">0,000000</span>
<span class="t" id="t76" style="top:193.88px;font-size:13.32px;line-height:20px;color:#1c1c1c;letter-spacing:0.451px;left:642.10px;">01/09/13 - 13:14:24</span>
<span class="t" id="t77" style="top:193.88px;font-size:13.32px;line-height:20px;color:#1c1c1c;letter-spacing:0.567px;left:792.10px;">0,004609</span>
<div class="a" style="left:887px;top:193.6px;width:79.5px;height:20px;overflow:hidden">
<span class="t" id="t78" style="top:0.28px;font-size:13.32px;line-height:20px;color:#1c1c1c;letter-spacing:0.445px;left:5.10px;">3428,160000</span>
</div>
<span class="t" id="t79" style="top:193.88px;font-size:13.32px;line-height:20px;color:#1c1c1c;letter-spacing:0.538px;left:972.50px;">0,000000</span>
<span class="t" id="t80" style="top:214.88px;font-size:13.32px;line-height:20px;color:#1c1c1c;letter-spacing:0.451px;left:642.10px;">01/09/13 - 13:15:50</span>
<span class="t" id="t81" style="top:214.88px;font-size:13.32px;line-height:20px;color:#1c1c1c;letter-spacing:0.567px;left:792.10px;">0,006882</span>
<div class="a" style="left:887px;top:214.6px;width:79.5px;height:20px;overflow:hidden">
<span class="t" id="t82" style="top:0.28px;font-size:13.32px;line-height:20px;color:#1c1c1c;letter-spacing:0.445px;left:5.10px;">3430,560000</span>
</div>
<span class="t" id="t83" style="top:214.88px;font-size:13.32px;line-height:20px;color:#1c1c1c;letter-spacing:0.538px;left:972.50px;">0,095160</span>
<span class="t" id="t84" style="top:235.88px;font-size:13.32px;line-height:20px;color:#1c1c1c;letter-spacing:0.451px;left:642.10px;">01/09/13 - 13:16:54</span>
<span class="t" id="t85" style="top:235.88px;font-size:13.32px;line-height:20px;color:#1c1c1c;letter-spacing:0.567px;left:792.10px;">0,006882</span>
<div class="a" style="left:887px;top:235.6px;width:79.5px;height:20px;overflow:hidden">
<span class="t" id="t86" style="top:0.28px;font-size:13.32px;line-height:20px;color:#1c1c1c;letter-spacing:0.445px;left:5.10px;">3430,560000</span>
</div>
<span class="t" id="t87" style="top:235.88px;font-size:13.32px;line-height:20px;color:#1c1c1c;letter-spacing:0.538px;left:972.50px;">0,000000</span>
<span class="t" id="t88" style="top:256.88px;font-size:13.32px;line-height:20px;color:#1c1c1c;letter-spacing:0.451px;left:642.10px;">01/09/13 - 13:18:06</span>
<span class="t" id="t89" style="top:256.88px;font-size:13.32px;line-height:20px;color:#1c1c1c;letter-spacing:0.567px;left:792.10px;">0,009332</span>
<div class="a" style="left:887px;top:256.6px;width:79.5px;height:20px;overflow:hidden">
<span class="t" id="t90" style="top:0.28px;font-size:13.32px;line-height:20px;color:#1c1c1c;letter-spacing:0.445px;left:5.10px;">3430,560000</span>
</div>
<span class="t" id="t91" style="top:256.88px;font-size:13.32px;line-height:20px;color:#1c1c1c;letter-spacing:0.538px;left:972.50px;">0,122463</span>
<span class="t" id="t92" style="top:277.88px;font-size:13.32px;line-height:20px;color:#1c1c1c;letter-spacing:0.451px;left:642.10px;">01/09/13 - 13:18:15</span>
<span class="t" id="t93" style="top:277.88px;font-size:13.32px;line-height:20px;color:#1c1c1c;letter-spacing:0.567px;left:792.10px;">0,009332</span>
<div class="a" style="left:887px;top:277.6px;width:79.5px;height:20px;overflow:hidden">
<span class="t" id="t94" style="top:0.28px;font-size:13.32px;line-height:20px;color:#1c1c1c;letter-spacing:0.445px;left:5.10px;">3430,560000</span>
</div>
<span class="t" id="t95" style="top:277.88px;font-size:13.32px;line-height:20px;color:#1c1c1c;letter-spacing:0.538px;left:972.50px;">0,000000</span>
<span class="t" id="t96" style="top:298.88px;font-size:13.32px;line-height:20px;color:#1c1c1c;letter-spacing:0.451px;left:642.10px;">01/09/13 - 13:18:28</span>
<span class="t" id="t97" style="top:298.88px;font-size:13.32px;line-height:20px;color:#1c1c1c;letter-spacing:0.567px;left:792.10px;">0,087733</span>
<div class="a" style="left:887px;top:298.6px;width:79.5px;height:20px;overflow:hidden">
<span class="t" id="t98" style="top:0.28px;font-size:13.32px;line-height:20px;color:#1c1c1c;letter-spacing:0.445px;left:5.10px;">3428,640000</span>
</div>
<span class="t" id="t99" style="top:298.88px;font-size:13.32px;line-height:20px;color:#1c1c1c;letter-spacing:0.756px;left:972.50px;">21,711130</span>
<span class="t" id="t100" style="top:319.88px;font-size:13.32px;line-height:20px;color:#1c1c1c;letter-spacing:0.451px;left:642.10px;">01/09/13 - 13:18:31</span>
<span class="t" id="t101" style="top:319.88px;font-size:13.32px;line-height:20px;color:#1c1c1c;letter-spacing:0.567px;left:792.10px;">0,104348</span>
<div class="a" style="left:887px;top:319.6px;width:79.5px;height:20px;overflow:hidden">
<span class="t" id="t102" style="top:0.28px;font-size:13.32px;line-height:20px;color:#1c1c1c;letter-spacing:0.445px;left:5.10px;">3427,680000</span>
</div>
<span class="t" id="t103" style="top:319.88px;font-size:13.32px;line-height:20px;color:#1c1c1c;letter-spacing:0.508px;left:972.50px;">19,938009</span>
<span class="t" id="t104" style="top:340.88px;font-size:13.32px;line-height:20px;color:#1c1c1c;letter-spacing:0.451px;left:642.10px;">01/09/13 - 13:18:51</span>
<span class="t" id="t105" style="top:340.88px;font-size:13.32px;line-height:20px;color:#1c1c1c;letter-spacing:0.567px;left:792.10px;">0,257816</span>
<div class="a" style="left:887px;top:340.6px;width:79.5px;height:20px;overflow:hidden">
<span class="t" id="t106" style="top:0.28px;font-size:13.32px;line-height:20px;color:#1c1c1c;letter-spacing:0.445px;left:5.10px;">3423,350000</span>
</div>
<span class="t" id="t107" style="top:340.88px;font-size:13.32px;line-height:20px;color:#1c1c1c;letter-spacing:0.508px;left:972.50px;">27,624297</span>
<span class="t" id="t108" style="top:361.88px;font-size:13.32px;line-height:20px;color:#1c1c1c;letter-spacing:0.451px;left:642.10px;">01/09/13 - 13:18:52</span>
<span class="t" id="t109" style="top:361.88px;font-size:13.32px;line-height:20px;color:#1c1c1c;letter-spacing:0.567px;left:792.10px;">0,267754</span>
<div class="a" style="left:887px;top:361.6px;width:79.5px;height:20px;overflow:hidden">
<span class="t" id="t110" style="top:0.28px;font-size:13.32px;line-height:20px;color:#1c1c1c;letter-spacing:0.445px;left:5.10px;">3423,350000</span>
</div>
<span class="t" id="t111" style="top:361.88px;font-size:13.32px;line-height:20px;color:#1c1c1c;letter-spacing:0.508px;left:972.50px;">35,775420</span>
<span class="t" id="t112" style="top:382.88px;font-size:13.32px;line-height:20px;color:#1c1c1c;letter-spacing:0.451px;left:642.10px;">01/09/13 - 13:19:00</span>
<span class="t" id="t113" style="top:382.88px;font-size:13.32px;line-height:20px;color:#1c1c1c;letter-spacing:0.567px;left:792.10px;">0,324431</span>
<div class="a" style="left:887px;top:382.6px;width:79.5px;height:20px;overflow:hidden">
<span class="t" id="t114" style="top:0.28px;font-size:13.32px;line-height:20px;color:#1c1c1c;letter-spacing:0.445px;left:5.10px;">3420,950000</span>
</div>
<span class="t" id="t115" style="top:382.88px;font-size:13.32px;line-height:20px;color:#1c1c1c;letter-spacing:0.508px;left:972.50px;">25,504617</span>
<span class="t" id="t116" style="top:403.88px;font-size:13.32px;line-height:20px;color:#1c1c1c;letter-spacing:0.451px;left:642.10px;">01/09/13 - 13:19:14</span>
<span class="t" id="t117" style="top:403.88px;font-size:13.32px;line-height:20px;color:#1c1c1c;letter-spacing:0.567px;left:792.10px;">0,416319</span>
<div class="a" style="left:887px;top:403.6px;width:79.5px;height:20px;overflow:hidden">
<span class="t" id="t118" style="top:0.28px;font-size:13.32px;line-height:20px;color:#1c1c1c;letter-spacing:0.445px;left:5.10px;">3416,630000</span>
</div>
<span class="t" id="t119" style="top:403.88px;font-size:13.32px;line-height:20px;color:#1c1c1c;letter-spacing:0.508px;left:972.50px;">23,628450</span>
<span class="t" id="t120" style="top:424.88px;font-size:13.32px;line-height:20px;color:#1c1c1c;letter-spacing:0.451px;left:642.10px;">01/09/13 - 13:19:19</span>
<span class="t" id="t121" style="top:424.88px;font-size:13.32px;line-height:20px;color:#1c1c1c;letter-spacing:0.567px;left:792.10px;">0,449887</span>
<div class="a" style="left:887px;top:424.6px;width:79.5px;height:20px;overflow:hidden">
<span class="t" id="t122" style="top:0.28px;font-size:13.32px;line-height:20px;color:#1c1c1c;letter-spacing:0.445px;left:5.10px;">3414,700000</span>
</div>
<span class="t" id="t123" style="top:424.88px;font-size:13.32px;line-height:20px;color:#1c1c1c;letter-spacing:0.508px;left:972.50px;">24,168481</span>
<span class="t" id="t124" style="top:445.88px;font-size:13.32px;line-height:20px;color:#1c1c1c;letter-spacing:0.451px;left:642.10px;">01/09/13 - 13:19:27</span>
<span class="t" id="t125" style="top:445.88px;font-size:13.32px;line-height:20px;color:#1c1c1c;letter-spacing:0.567px;left:792.10px;">0,503423</span>
<div class="a" style="left:887px;top:445.6px;width:79.5px;height:20px;overflow:hidden">
<span class="t" id="t126" style="top:0.28px;font-size:13.32px;line-height:20px;color:#1c1c1c;letter-spacing:0.445px;left:5.10px;">3410,860000</span>
</div>
<span class="t" id="t127" style="top:445.88px;font-size:13.32px;line-height:20px;color:#1c1c1c;letter-spacing:0.508px;left:972.50px;">24,091257</span>
<span class="t" id="t128" style="top:466.88px;font-size:13.32px;line-height:20px;color:#1c1c1c;letter-spacing:0.451px;left:642.10px;">01/09/13 - 13:19:28</span>
<span class="t" id="t129" style="top:466.88px;font-size:13.32px;line-height:20px;color:#1c1c1c;letter-spacing:0.567px;left:792.10px;">0,510100</span>
<div class="a" style="left:887px;top:466.6px;width:79.5px;height:20px;overflow:hidden">
<span class="t" id="t130" style="top:0.28px;font-size:13.32px;line-height:20px;color:#1c1c1c;letter-spacing:0.445px;left:5.10px;">3410,860000</span>
</div>
<span class="t" id="t131" style="top:466.88px;font-size:13.32px;line-height:20px;color:#1c1c1c;letter-spacing:0.508px;left:972.50px;">24,038002</span>
<div class="a" style="left:628px;top:493px;width:604px;height:48px;background:#d6d6d6"></div>
<div class="a" style="left:637px;top:492px;width:586px;height:1px;background:#9a9a9a"></div>
<div class="a" style="left:1133px;top:500px;width:85px;height:27px;border:1px solid #9a9a9a;border-radius:3px;background:linear-gradient(#e9e9e9,#d6d6d6);box-shadow:inset 0 1px 0 #f6f6f6"></div>
<span class="t" id="t132" style="top:504.28px;font-size:13.32px;line-height:20px;color:#2a2a2a;letter-spacing:-0.387px;left:975.31px;width:400px;text-align:center;">Close</span>
<svg width="1334" height="757"><path d="M1227.5 531l-6.5 6.5h6.5z" fill="#c4c4c4" stroke="#9a9a9a" stroke-width=".8"/></svg>
<!-- p_taskbar -->
<div class="a" style="left:0;top:734px;width:1334px;height:23px;background:linear-gradient(#f6f6f6,#ebebeb 30%,#e8e8e8);border-top:1px solid #fdfdfd"></div>
<div class="a" style="left:70px;top:736px;width:27px;height:25px;border:1px solid #bcbcbc;border-radius:4px;background:#fdfdfd"></div>
<div class="a" style="left:112px;top:737px;width:166px;height:24px;border-radius:4px;border:1px solid #b9b9b9;background:#fdfdfd"></div>
<div class="a" style="left:282px;top:737px;width:168px;height:24px;border-radius:4px;border:1px solid #b9b9b9;background:#fdfdfd"></div>
<div class="a" style="left:454px;top:737px;width:168px;height:24px;border-radius:4px;border:1px solid #b9b9b9;background:#fdfdfd"></div>
<div class="a" style="left:627px;top:737px;width:167px;height:24px;border-radius:4px;border:1px solid #8c8c8c;background:linear-gradient(#bdbdbd,#d4d4d4 45%,#dedede);box-shadow:inset 0 1px 2px rgba(0,0,0,.18)"></div>
<svg width="1334" height="757" viewBox="0 0 1334 757">
<defs><linearGradient id="gd" x1="0" y1="0" x2="0" y2="1"><stop offset="0" stop-color="#8fb566"/><stop offset=".55" stop-color="#9cc070"/><stop offset="1" stop-color="#6f9a44"/></linearGradient><radialGradient id="ffb" cx=".45" cy=".35" r=".6"><stop offset="0" stop-color="#8fd0ee"/><stop offset=".6" stop-color="#2a78c0"/><stop offset="1" stop-color="#123a80"/></radialGradient><radialGradient id="shb" cx=".4" cy=".3" r=".8"><stop offset="0" stop-color="#6aa6e8"/><stop offset=".6" stop-color="#2a64c4"/><stop offset="1" stop-color="#183f96"/></radialGradient><linearGradient id="shg" x1="0" y1="0" x2="1" y2="1"><stop offset="0" stop-color="#fdfdfd"/><stop offset="1" stop-color="#b8b8b8"/></linearGradient></defs>
<path d="M12.84 742.01L14.20 737.90L15.56 742.01ZM16.35 742.33L20.21 740.39L18.27 744.25ZM18.59 745.04L22.70 746.40L18.59 747.76ZM18.27 748.55L20.21 752.41L16.35 750.47ZM15.56 750.79L14.20 754.90L12.84 750.79ZM12.05 750.47L8.19 752.41L10.13 748.55ZM9.81 747.76L5.70 746.40L9.81 745.04ZM10.13 744.25L8.19 740.39L12.05 742.33Z" fill="#3a3a3a"/><circle cx="14.2" cy="746.4" r="4.15" fill="none" stroke="#3a3a3a" stroke-width="2.3"/>
<path d="M72.4 738.3h21.3v15.3q0 2-2 2h-17.3q-2 0-2-2z" fill="url(#gd)"/><rect x="72.4" y="738.2" width="21.3" height="3.2" fill="#fafafa"/><path d="M72.4 738.2v3M93.7 738.2v3" stroke="#b0b0b0" stroke-width=".8"/><rect x="72.4" y="741.3" width="21.3" height="1" fill="#474747"/><path d="M75.8 751h14.4v4.6h-14.4z" fill="#47602f"/><path d="M72.9 742.3v11.5M93.2 742.3v11.5" stroke="#5f8a34" stroke-width="1"/><path d="M74 755.2h18" stroke="#4f7a2a" stroke-width=".9"/>
<path d="M102 744.5h4M102 747.5h4M102 750.5h4" stroke="#a8a8a8" stroke-width="1"/><path d="M1249.5 744.5h4M1249.5 747.5h4M1249.5 750.5h4" stroke="#a8a8a8" stroke-width="1"/>
<g><circle cx="127" cy="745.6" r="5.6" fill="url(#ffb)"/><path fill-rule="evenodd" fill="#e9711a" d="M126 740a7.3 7.3 0 1 0 .01 0zM127.4 740.6a4.7 4.7 0 1 1 -.01 0z"/><path d="M119.3 742.2l3.2-.6 1.2 1.9c2.2 .2 3.6 1 4.6 2.4-1.6 .2-2.8 1-3.3 2.3 1.6 1.6 4.2 1.4 5.8 0-.8 3-3.6 4.8-6.6 4.2-3.2-.6-5.4-3.4-5.2-6.6z" fill="#e86512"/><path d="M132.9 745.5a7.3 7.3 0 0 1 -6.5 9.1" stroke="#f8c51e" stroke-width="1.7" fill="none"/><path d="M119.2 743.8l1.4-3 2.4 1.6z" fill="#e8a020"/><path d="M130.6 740.8l2.4 .4-.4 3.2z" fill="#f8c51e"/></g>
<g><rect x="290" y="740" width="14" height="14" rx="2" fill="#2a2a2a" stroke="#8a8a8a" stroke-width="1"/><path d="M292.8 744.5l2.8 2-2.8 2" stroke="#f2f2f2" stroke-width="1.3" fill="none"/><path d="M296.8 749.5h3.6" stroke="#f2f2f2" stroke-width="1.2"/><path d="M290 754.8h14" stroke="#c8c8c8" stroke-width="1"/></g>
<g transform="translate(461 740)"><rect x="0.5" y="1.5" width="4" height="3" fill="#fff" stroke="#5a6e9a" stroke-width="1"/><rect x="6.5" y="0.5" width="3" height="5" fill="#fff" stroke="#5a6e9a" stroke-width="1"/><rect x="11.5" y="1.5" width="4" height="3" fill="#fff" stroke="#5a6e9a" stroke-width="1"/><path d="M4.5 3h2M9.5 3h2" stroke="#5a6e9a" stroke-width="1"/><rect x="0.5" y="8.5" width="15" height="6" fill="#e9f3d8" stroke="#58a618" stroke-width="1.2"/><path d="M0 14.3h16" stroke="#4c9a10" stroke-width="1.6"/><path d="M3 11.5h10" stroke="#8a8a8a" stroke-width="1.4"/><circle cx="4.2" cy="11.2" r="2.3" fill="#8e8e8e"/><circle cx="11.6" cy="11.2" r="2.5" fill="#f08a1c"/></g>
<g transform="translate(633 740)"><rect x="0.5" y="1.5" width="4" height="3" fill="#fff" stroke="#5a6e9a" stroke-width="1"/><rect x="6.5" y="0.5" width="3" height="5" fill="#fff" stroke="#5a6e9a" stroke-width="1"/><rect x="11.5" y="1.5" width="4" height="3" fill="#fff" stroke="#5a6e9a" stroke-width="1"/><path d="M4.5 3h2M9.5 3h2" stroke="#5a6e9a" stroke-width="1"/><rect x="0.5" y="8.5" width="15" height="6" fill="#e9f3d8" stroke="#58a618" stroke-width="1.2"/><path d="M0 14.3h16" stroke="#4c9a10" stroke-width="1.6"/><path d="M3 11.5h10" stroke="#8a8a8a" stroke-width="1.4"/><circle cx="4.2" cy="11.2" r="2.3" fill="#8e8e8e"/><circle cx="11.6" cy="11.2" r="2.5" fill="#f08a1c"/></g>
<g><path d="M1268 736.5c3 1.8 6 2.4 9.3 2.4 0 8-2.6 14-9.3 18-6.7-4-9.3-10-9.3-18 3.3 0 6.3-.6 9.3-2.4z" fill="url(#shg)" stroke="#8a8a8a" stroke-width=".9"/><circle cx="1268" cy="746.3" r="6.8" fill="url(#shb)" stroke="#163a8a" stroke-width=".6"/><rect x="1267" y="745.3" width="2.2" height="5" fill="#fff"/><circle cx="1268.1" cy="743.2" r="1.3" fill="#fff"/></g>
<path d="M1288.3 742.3l8 7.6-4 4v-16l4 4-8 7.6" stroke="#2e2e2e" stroke-width="1.3" fill="none" stroke-linejoin="miter"/>
<g fill="#2e2e2e"><path d="M1309 743h3.5l4.5-4.5v15.5l-4.5-4.5h-3.5z"/></g><g fill="none" stroke="#3a3a3a" stroke-width="1.5" stroke-linecap="round"><path d="M1319.2 742.8c1.6 2 1.6 5 0 7"/><path d="M1321.8 740.6c2.8 3.2 2.8 8.2 0 11.4" opacity=".95"/><path d="M1324.4 738.6c4 4.4 4 11 0 15.4" opacity=".85"/></g>
</svg>
<span class="t" id="t133" style="top:737.08px;font-size:13.32px;line-height:20px;color:#2a2a2a;letter-spacing:-0.304px;left:30.10px;">Menu</span>
<span class="t" id="t134" style="top:737.08px;font-size:13.32px;line-height:20px;color:#2a2a2a;letter-spacing:-0.169px;left:141.50px;">Andrew Gee » GPX ...</span>
<span class="t" id="t135" style="top:737.08px;font-size:13.32px;line-height:20px;color:#2a2a2a;letter-spacing:0.027px;left:312.50px;">Terminal</span>
<span class="t" id="t136" style="top:737.08px;font-size:13.32px;line-height:20px;color:#2a2a2a;letter-spacing:-0.418px;left:484.50px;">GPX Viewer</span>
<span class="t" id="t137" style="top:737.68px;font-size:13.32px;line-height:20px;color:#2a2a2a;letter-spacing:-0.030px;left:656.50px;">Track list</span>
<span class="t" id="t138" style="top:737.08px;font-size:13.32px;line-height:20px;color:#2a2a2a;letter-spacing:0.181px;left:801.90px;">Dom 02 Jun, 23:46</span>
</div></body></html>
